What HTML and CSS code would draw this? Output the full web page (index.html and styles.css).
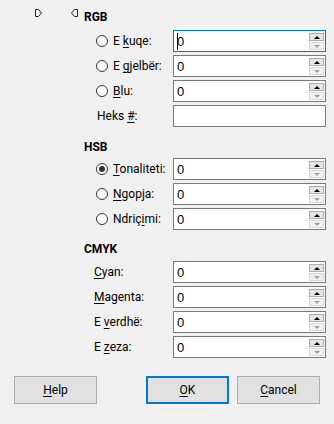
FILE: index.html
```html
<!DOCTYPE html>
<html lang="sq">
<head>
  <meta charset="UTF-8" />
  <title>Zgjidh ngjyrën</title>
  <link rel="stylesheet" href="styles.css">
</head>
<body>
  <div class="dialog">
    <div class="content">
      <div class="side">
        <svg class="arrow" width="7" height="8" viewBox="0 0 7 8"><path d="M0.5 0.5 H3.5 L6.5 4 L3.5 7.5 H0.5 Z" fill="none" stroke="#222" stroke-width="1"/></svg>
        <svg class="arrow" width="7" height="8" viewBox="0 0 7 8"><path d="M6.5 0.5 H3.5 L0.5 4 L3.5 7.5 H6.5 Z" fill="none" stroke="#222" stroke-width="1"/></svg>
      </div>

      <div class="form">
        <div class="section">
          <div class="heading">RGB</div>
          <div class="row">
            <label class="label"><span class="radio"></span><span>E <u>k</u>uqe:</span></label>
            <div class="field focused"><span class="value"><span class="caret"></span>0</span><span class="spin"><span class="up"></span><span class="down"></span></span></div>
          </div>
          <div class="row">
            <label class="label"><span class="radio"></span><span>E <u>g</u>jelbër:</span></label>
            <div class="field"><span class="value">0</span><span class="spin"><span class="up"></span><span class="down"></span></span></div>
          </div>
          <div class="row">
            <label class="label"><span class="radio"></span><span><u>B</u>lu:</span></label>
            <div class="field"><span class="value">0</span><span class="spin"><span class="up"></span><span class="down"></span></span></div>
          </div>
          <div class="row">
            <label class="label plain hex"><span>Heks <u>#</u>:</span></label>
            <div class="field"><span class="value"></span></div>
          </div>
        </div>

        <div class="section hsb">
          <div class="heading">HSB</div>
          <div class="row">
            <label class="label"><span class="radio checked"></span><span><u>T</u>onaliteti:</span></label>
            <div class="field"><span class="value">0</span><span class="spin"><span class="up"></span><span class="down"></span></span></div>
          </div>
          <div class="row">
            <label class="label"><span class="radio"></span><span><u>N</u>gopja:</span></label>
            <div class="field"><span class="value">0</span><span class="spin"><span class="up"></span><span class="down"></span></span></div>
          </div>
          <div class="row">
            <label class="label"><span class="radio"></span><span>Ndriç<u>i</u>mi:</span></label>
            <div class="field"><span class="value">0</span><span class="spin"><span class="up"></span><span class="down"></span></span></div>
          </div>
        </div>

        <div class="section cmyk">
          <div class="heading">CMYK</div>
          <div class="row">
            <label class="label plain"><span><u>C</u>yan:</span></label>
            <div class="field"><span class="value">0</span><span class="spin"><span class="up"></span><span class="down"></span></span></div>
          </div>
          <div class="row">
            <label class="label plain"><span><u>M</u>agenta:</span></label>
            <div class="field"><span class="value">0</span><span class="spin"><span class="up"></span><span class="down"></span></span></div>
          </div>
          <div class="row">
            <label class="label plain"><span>E <u>v</u>erdhë:</span></label>
            <div class="field"><span class="value">0</span><span class="spin"><span class="up"></span><span class="down"></span></span></div>
          </div>
          <div class="row">
            <label class="label plain"><span>E <u>z</u>eza:</span></label>
            <div class="field"><span class="value">0</span><span class="spin"><span class="up"></span><span class="down"></span></span></div>
          </div>
        </div>
      </div>
    </div>

    <div class="buttons">
      <button class="btn"><u>H</u>elp</button>
      <div class="group">
        <button class="btn default"><u>O</u>K</button>
        <button class="btn"><u>C</u>ancel</button>
      </div>
    </div>
  </div>
</body>
</html>
```

FILE: styles.css
```css
* {
  margin: 0;
  padding: 0;
  box-sizing: border-box;
}

body {
  background-color: #f0f0f0;
  font-family: Roboto, "Noto Sans", sans-serif;
  font-size: 12px;
  color: #000;
}

u {
  text-underline-offset: 2px;
}

.dialog {
  width: 334px;
  height: 424px;
  display: flex;
  flex-direction: column;
}

.content {
  display: flex;
}

.side {
  width: 84px;
  display: flex;
  align-items: flex-start;
  gap: 29px;
  padding: 9px 0 0 35px;
}

.form {
  width: 242px;
  padding-top: 9px;
}

.heading {
  height: 16px;
  line-height: 16px;
  font-weight: bold;
  margin-bottom: 5px;
}

.hsb {
  margin-top: 12px;
}

.hsb .heading {
  margin-bottom: 3px;
}

.cmyk {
  margin-top: 11px;
}

.cmyk .heading {
  margin-bottom: 4px;
}

.row {
  display: flex;
  align-items: center;
  height: 22px;
  margin-bottom: 3px;
}

.label {
  width: 89px;
  display: flex;
  align-items: center;
  padding-left: 12px;
  white-space: nowrap;
}

.label.plain {
  padding-left: 10px;
}

.label.hex {
  padding-left: 13px;
}

.radio {
  width: 12px;
  height: 12px;
  border: 1px solid #333;
  border-radius: 50%;
  background-color: #fff;
  margin-right: 5px;
  display: flex;
  align-items: center;
  justify-content: center;
}

.radio.checked::after {
  content: "";
  width: 6px;
  height: 6px;
  border-radius: 50%;
  background-color: #333;
}

.field {
  width: 153px;
  height: 22px;
  border: 1px solid #7a7a7a;
  background-color: #fff;
  display: flex;
  align-items: stretch;
  padding: 1px;
}

.field.focused {
  border-color: #0078d7;
}

.value {
  flex: 1;
  display: flex;
  align-items: center;
  padding-left: 2px;
  font-family: "Liberation Sans", Arial, sans-serif;
  font-size: 13px;
}

.caret {
  width: 1px;
  height: 17px;
  background-color: #000;
  margin-right: -1px;
  position: relative;
  z-index: 1;
}

.spin {
  width: 15px;
  display: flex;
  flex-direction: column;
  gap: 1px;
  padding-top: 1px;
}

.spin span {
  height: 9px;
  display: flex;
  align-items: center;
  justify-content: center;
}

.up {
  border: 1px solid #adadad;
  background-color: #e5e5e5;
}

.down {
  border: 1px solid #d9d9d9;
  background-color: #f0f0f0;
}

.up::after {
  content: "";
  border-left: 3px solid transparent;
  border-right: 3px solid transparent;
  border-bottom: 3px solid #000;
}

.down::after {
  content: "";
  border-left: 3px solid transparent;
  border-right: 3px solid transparent;
  border-top: 3px solid #a0a0a0;
}

.buttons {
  display: flex;
  justify-content: space-between;
  padding: 0 14px;
  margin-top: 15px;
}

.group {
  display: flex;
  gap: 8px;
}

.btn {
  width: 83px;
  height: 28px;
  border: 1px solid #adadad;
  background-color: #e1e1e1;
  font-family: Roboto, "Noto Sans", sans-serif;
  font-size: 12px;
  color: #000;
}

.btn.default {
  border: 2px solid #0078d7;
}
```
